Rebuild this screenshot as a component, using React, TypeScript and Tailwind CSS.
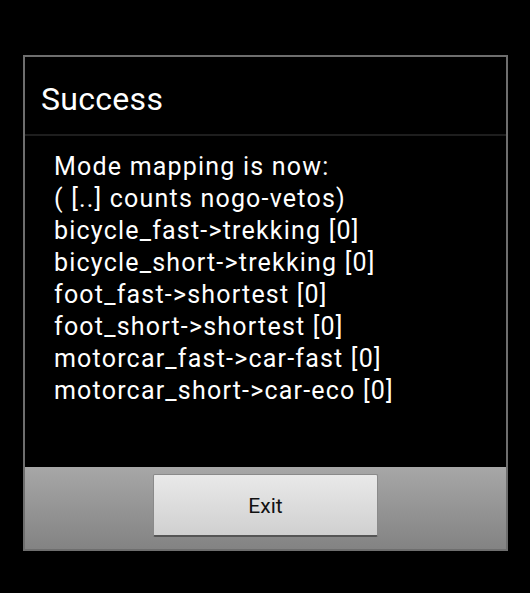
import React from 'react';

const lines = [
  'Mode mapping is now:',
  '( [..] counts nogo-vetos)',
  'bicycle_fast->trekking [0]',
  'bicycle_short->trekking [0]',
  'foot_fast->shortest [0]',
  'foot_short->shortest [0]',
  'motorcar_fast->car-fast [0]',
  'motorcar_short->car-eco [0]',
];

export default function App() {
  return (
    <div className="w-[530px] h-[593px] bg-black pt-[55px] pl-[23px] font-['Roboto',sans-serif]">
      {/* Dialog */}
      <div className="w-[485px] h-[496px] border-2 border-[#6e6e6e] flex flex-col bg-black">
        {/* Title */}
        <div className="h-[79px] pl-[16px] pt-[23px] text-white text-[32px] leading-[38px] tracking-[0.3px] border-b-2 border-[#1e1e1e]">
          Success
        </div>

        {/* Message */}
        <div className="flex-1 pl-[29px] pt-[15px] text-white text-[25px] leading-[32px] tracking-[1.2px]">
          {lines.map((l) => (
            <div key={l}>{l}</div>
          ))}
        </div>

        {/* Button bar */}
        <div className="h-[82px] bg-gradient-to-b from-[#a7a7a7] to-[#838383] flex justify-center pt-[7px]">
          <button className="w-[225px] h-[63px] rounded-[2px] bg-gradient-to-b from-[#e9e9e9] to-[#d0d0d0] border border-[#8a8a8a] border-b-2 border-b-[#555] text-[#111] text-[21px] flex items-center justify-center pt-[4px]">
            Exit
          </button>
        </div>
      </div>
    </div>
  );
}
